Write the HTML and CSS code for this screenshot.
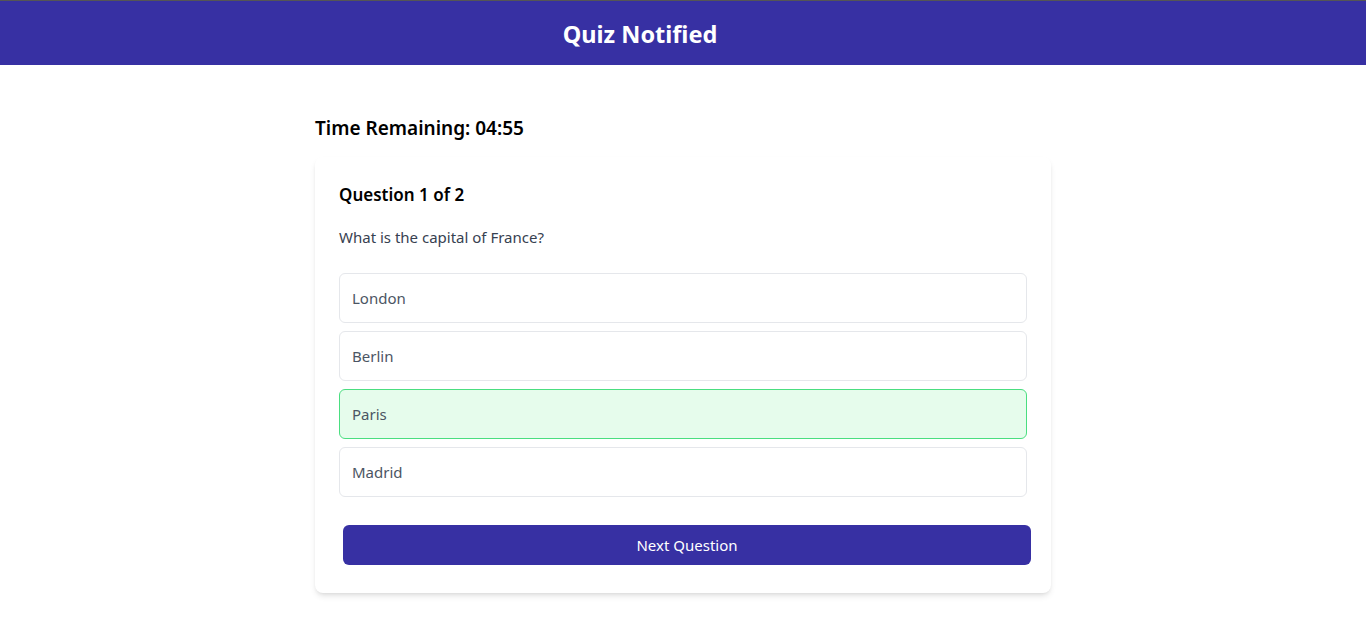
FILE: index.html
```html
<!DOCTYPE html>
<html lang="en">
<head>
<meta charset="utf-8">
<title>Quiz Notified</title>
<link rel="stylesheet" href="styles.css">
</head>
<body>
<header class="topbar">
  <div class="topbar-inner">
    <h1 class="brand">Quiz Notified</h1>
  </div>
</header>
<main class="page">
  <h2 class="timer">Time Remaining: 04:55</h2>
  <section class="card">
    <h3 class="q-count">Question 1 of 2</h3>
    <p class="q-text">What is the capital of France?</p>
    <div class="options">
      <div class="option">London</div>
      <div class="option">Berlin</div>
      <div class="option selected">Paris</div>
      <div class="option">Madrid</div>
    </div>
    <div class="actions">
      <button class="next-btn">Next Question</button>
    </div>
  </section>
</main>
</body>
</html>
```
FILE: styles.css
```css
* { box-sizing: border-box; }
html, body { margin: 0; padding: 0; }
body {
  font-family: "Noto Sans", "Open Sans", sans-serif;
  background: #ffffff;
  color: #000;
}
.topbar {
  background: #3730a3;
  border-top: 1px solid #555555;
}
.topbar-inner {
  max-width: 1280px;
  padding: 16px 0;
  text-align: center;
}
.brand {
  margin: 0;
  font-size: 23.5px;
  line-height: 32px;
  font-weight: 700;
  color: #ffffff;
  position: relative;
  top: 1px;
}
.page {
  max-width: 768px;
  margin: 0 auto;
  padding: 48px 16px;
}
.timer {
  margin: 0 0 16px;
  font-size: 19px;
  line-height: 28px;
  font-weight: 600;
  position: relative;
  top: 1px;
}
.card {
  background: #fff;
  border-radius: 8px;
  padding: 24px;
  box-shadow: 0 4px 6px -1px rgba(0,0,0,0.1), 0 2px 4px -2px rgba(0,0,0,0.1);
}
.q-count {
  margin: 0 0 16px;
  font-size: 17px;
  line-height: 28px;
  font-weight: 600;
}
.q-text {
  margin: 0 0 24px;
  font-size: 15px;
  line-height: 24px;
  color: #374151;
}
.options {
  display: flex;
  flex-direction: column;
  gap: 8px;
}
.option {
  height: 50px;
  display: flex;
  align-items: center;
  padding: 0 12px;
  border: 1px solid #e5e7eb;
  border-radius: 6px;
  font-size: 15px;
  color: #4b5563;
}
.option.selected {
  background: #e6fcec;
  border-color: #4ade80;
}
.actions {
  margin-top: 24px;
  display: flow-root;
}
.next-btn {
  display: block;
  width: 100%;
  margin: 4px;
  height: 40px;
  border: 0;
  border-radius: 6px;
  background: #3730a3;
  color: #fff;
  font-family: inherit;
  font-size: 15px;
}
```
